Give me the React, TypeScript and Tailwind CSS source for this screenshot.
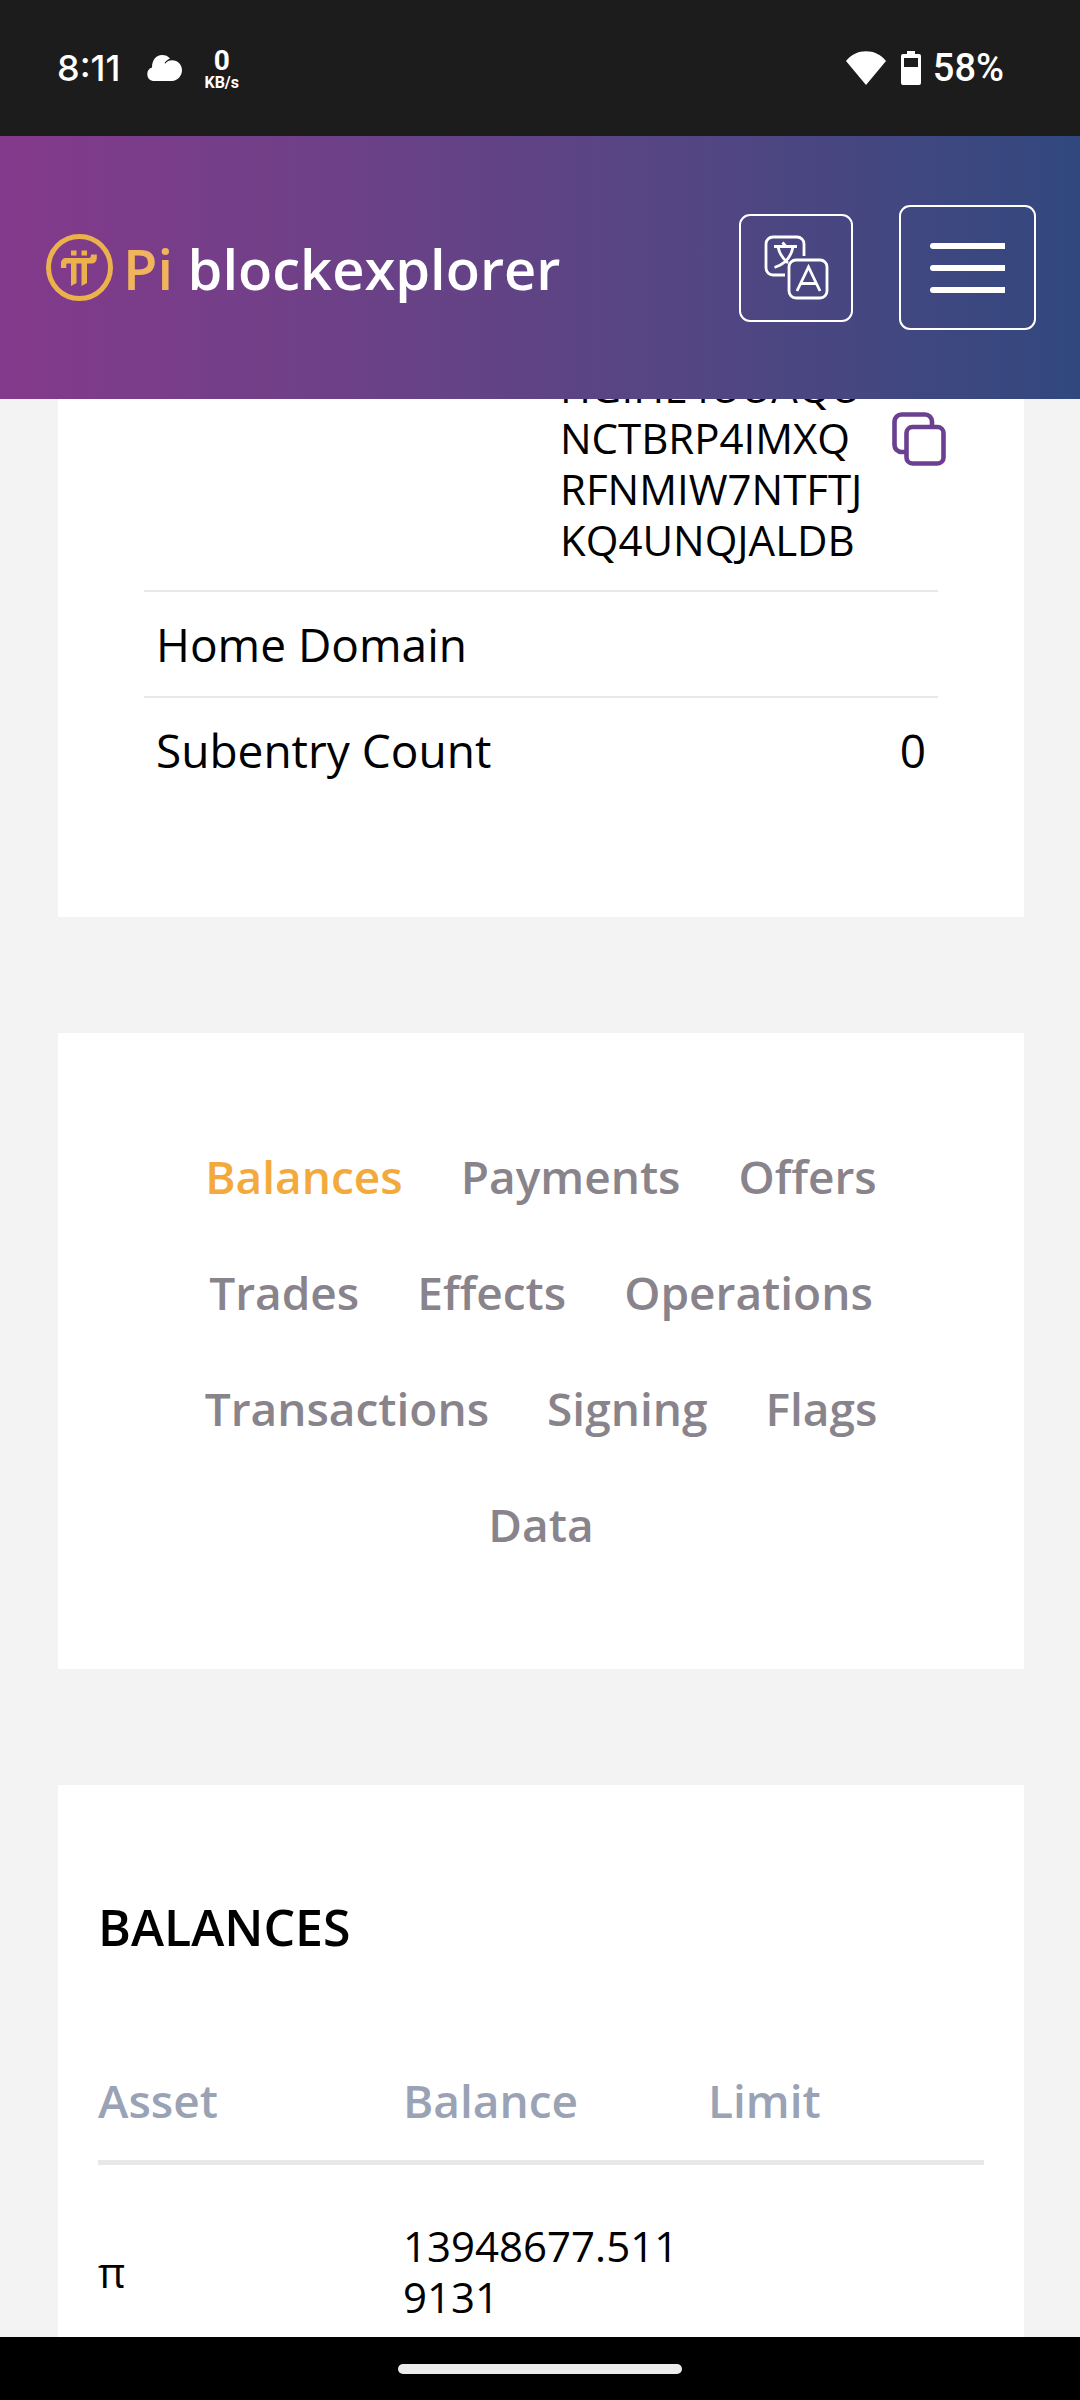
const addressLines = ["HGIHL4UUAQU", "NCTBRP4IMXQ", "RFNMIW7NTFTJ", "KQ4UNQJALDB"];

const tabs = [
  "Balances",
  "Payments",
  "Offers",
  "Trades",
  "Effects",
  "Operations",
  "Transactions",
  "Signing",
  "Flags",
  "Data",
];

function StatusBar() {
  return (
    <div className="flex h-[136px] shrink-0 items-center justify-between bg-[#1c1c1c] pr-[76px] pl-[57px] font-['Roboto',sans-serif] text-[38px] font-medium text-white">
      <div className="flex items-center">
        <span className="font-['Inter',sans-serif] text-[36px]">8:11</span>
        <svg className="ml-[26px] h-[26px] w-9" viewBox="0 0 36 26" fill="#fff" aria-hidden="true">
          <path d="M7 26a7 7 0 0 1-1-13.500C6 5 10 0 16 0c3.500 0 6 1 8 3.500-2 .7-4 2.200-5.500 4.500l1 .5C21 6.500 23 5.300 26 5.300c6 0 10 4.500 10 10S31.500 26 26 26Z" />
        </svg>
        <div className="ml-[22px] flex flex-col items-center pt-1 font-bold">
          <span className="text-[28px] leading-[26px]">0</span>
          <span className="text-[16px] leading-[18px]">KB/s</span>
        </div>
      </div>
      <div className="flex items-center">
        <svg className="h-[34px] w-10" viewBox="0 0 40 34" fill="#fff" aria-hidden="true">
          <path d="M0 10C10-3 30-3 40 10L20 34Z" />
        </svg>
        <svg className="ml-[15px] h-[34px] w-5" viewBox="0 0 20 34" aria-hidden="true">
          <path
            fill="#fff"
            fillRule="evenodd"
            d="M6 0h8v3h4a2 2 0 0 1 2 2v27a2 2 0 0 1-2 2H2a2 2 0 0 1-2-2V5a2 2 0 0 1 2-2h4ZM3 7v9h14V7Z"
          />
        </svg>
        <span className="ml-3">58%</span>
      </div>
    </div>
  );
}

function Header() {
  return (
    <header className="flex h-[263px] shrink-0 items-center bg-linear-to-r from-[#84398b] to-[#30487e] pr-11 pl-[46px]">
      <a href="#home" className="flex items-center gap-2.5">
        <svg className="size-[67px]" viewBox="0 0 67 67" fill="#ebb14d" aria-hidden="true">
          <circle cx="33.500" cy="33.500" r="31" fill="none" stroke="#ebb14d" strokeWidth="5" />
          <path d="M25 16.500h5.500v5H25zM35.500 16.500H41v5h-5.500z" />
          <path d="M15 34v-4.500c0-3.500 2-5.500 5.500-5.500H43c1.500 0 2-.7 2-3.500h5.800v3c0 4-2 6-6 6H41V49l-5.500 3V29.500h-5V49L25 52V29.500h-3.500c-.8 0-1.200.4-1.200 1.200V34Z" />
        </svg>
        <span className="text-[56px] leading-[76px] font-semibold whitespace-nowrap text-white">
          <span className="text-[#f0b55c]">Pi</span> blockexplorer
        </span>
      </a>
      <button
        type="button"
        aria-label="Change language"
        className="ml-auto flex h-[108px] w-[114px] items-center justify-center rounded-[11px] border-2 border-white"
      >
        <svg
          className="size-[65px]"
          viewBox="0 0 65 65"
          fill="none"
          stroke="#fff"
          strokeWidth="2.800"
          aria-hidden="true"
        >
          <path d="M21 40H9a7 7 0 0 1-7-7V9a7 7 0 0 1 7-7h24a7 7 0 0 1 7 7v12" />
          <rect x="25" y="25" width="38" height="38" rx="7" />
          <path d="M18.500 7.500l3 3.500M10 11.500h23M14 12c1.500 7 5 12 10 16M29 12c-2 10-7 17-18.500 20.500M33 56l11.500-24L56 56M37 48.500h15" />
        </svg>
      </button>
      <button
        type="button"
        aria-label="Open menu"
        className="ml-[46px] flex h-[125px] w-[137px] flex-col items-center justify-center gap-4 rounded-[11px] border-2 border-white"
      >
        <span className="h-1.5 w-[75px] rounded-l-full bg-white" />
        <span className="h-1.5 w-[75px] rounded-l-full bg-white" />
        <span className="h-1.5 w-[75px] rounded-l-full bg-white" />
      </button>
    </header>
  );
}

function AccountDetails() {
  return (
    <section className="bg-white px-[86px] pb-[115px]">
      <dl>
        <div className="flex border-b-2 border-[#e8e8e8] px-3 pb-[25px]">
          <dt />
          <dd className="-mt-[38px] -mr-5 ml-auto flex items-start">
            <span className="w-[332px] text-[42px] leading-[51px]">
              {addressLines.map((line) => (
                <span key={line} className="block">
                  {line}
                </span>
              ))}
            </span>
            <button type="button" aria-label="Copy address" className="mt-[51px]">
              <svg
                className="size-[54px]"
                viewBox="0 0 54 54"
                fill="none"
                stroke="#6b4091"
                strokeWidth="4.600"
                aria-hidden="true"
              >
                <path d="M14 40H9.500a7 7 0 0 1-7-7V9.500a7 7 0 0 1 7-7h23.500a7 7 0 0 1 7 7v5" />
                <rect x="14.500" y="15" width="37" height="36.500" rx="6" />
              </svg>
            </button>
          </dd>
        </div>
        <div className="flex h-[106px] items-center justify-between border-b-2 border-[#e8e8e8] px-3 text-[46px] leading-[60px]">
          <dt>Home Domain</dt>
          <dd />
        </div>
        <div className="flex h-[104px] items-center justify-between px-3 text-[46px] leading-[60px]">
          <dt>Subentry Count</dt>
          <dd>0</dd>
        </div>
      </dl>
    </section>
  );
}

function Tabs() {
  return (
    <nav className="flex flex-wrap justify-center gap-x-[58px] gap-y-14 bg-white px-[83px] pt-[113px] pb-[115px] text-[46px] leading-[60px] font-semibold text-[#89838b]">
      {tabs.map((tab, i) => (
        <a key={tab} href={"#" + tab.toLowerCase()} className={i === 0 ? "text-[#f3a93c]" : undefined}>
          {tab}
        </a>
      ))}
    </nav>
  );
}

function Balances() {
  return (
    <section className="bg-white px-10 pt-[112px] pb-28">
      <h2 className="text-[50px] leading-[60px] font-semibold">BALANCES</h2>
      <table className="mt-[113px] w-full table-fixed text-left">
        <thead className="border-b-[5px] border-[#e8e8ea] text-[46px] leading-[60px] text-[#9aa3b5]">
          <tr>
            <th className="w-[305px] pb-[30px] font-semibold">Asset</th>
            <th className="w-[305px] pb-[30px] font-semibold">Balance</th>
            <th className="pb-[30px] font-semibold">Limit</th>
          </tr>
        </thead>
        <tbody className="text-[42px] leading-[51px]">
          <tr>
            <td className="pt-[55px]">π</td>
            <td className="pt-[55px] pr-5 break-all">13948677.5119131</td>
            <td className="pt-[55px]" />
          </tr>
        </tbody>
      </table>
    </section>
  );
}

export default function App() {
  return (
    <div className="flex h-screen flex-col overflow-hidden bg-[#f3f3f3] font-['Open_Sans',sans-serif] text-black">
      <StatusBar />
      <Header />
      <main className="flex min-h-0 flex-1 flex-col gap-[116px] overflow-hidden pr-14 pl-[58px] *:shrink-0">
        <AccountDetails />
        <Tabs />
        <Balances />
      </main>
      <div className="flex h-[63px] shrink-0 items-center justify-center bg-black">
        <div className="h-2.5 w-[284px] rounded-full bg-[#ececec]" />
      </div>
    </div>
  );
}
